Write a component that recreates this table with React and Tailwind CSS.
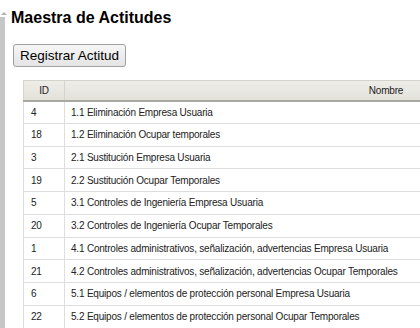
import React from 'react';

const rows = [
  [4, '1.1 Eliminación Empresa Usuaria'],
  [18, '1.2 Eliminación Ocupar temporales'],
  [3, '2.1 Sustitución Empresa Usuaria'],
  [19, '2.2 Sustitución Ocupar Temporales'],
  [5, '3.1 Controles de Ingeniería Empresa Usuaria'],
  [20, '3.2 Controles de Ingeniería Ocupar Temporales'],
  [1, '4.1 Controles administrativos, señalización, advertencias Empresa Usuaria'],
  [21, '4.2 Controles administrativos, señalización, advertencias Ocupar Temporales'],
  [6, '5.1 Equipos / elementos de protección personal Empresa Usuaria'],
  [22, '5.2 Equipos / elementos de protección personal Ocupar Temporales'],
];

export default function App() {
  return (
    <div
      className="flex h-[328px] w-[420px] overflow-hidden bg-white text-[#222]"
      style={{ fontFamily: '"Liberation Sans", Arial, sans-serif' }}
    >
      {/* sidebar strip */}
      <div className="flex w-[5px] shrink-0 flex-col">
        <div className="h-[12px]" />
        <div className="ml-[1px] h-0 w-0 border-x-[3px] border-b-[3px] border-x-transparent border-b-[#b0b0b0]" />
        <div className="mt-[2px] flex-1 bg-[#c6c6c6]" />
      </div>

      <div className="flex-1 pl-[6px]">
        <h1 className="mt-[7px] text-[16px] font-bold leading-[22px] text-black">Maestra de Actitudes</h1>
        <button className="ml-[2px] mt-[15px] h-[23px] w-[113px] rounded-[3px] border border-[#a0a0a0] bg-gradient-to-b from-[#f6f6f6] to-[#e4e4e4] text-[13.5px] leading-[20px] text-black">
          Registrar Actitud
        </button>

        <table className="ml-[12px] mt-[13px] w-[685px] border-collapse text-[10px] tracking-[-0.2px]">
          <thead>
            <tr className="h-[20px] bg-gradient-to-b from-[#eeede8] to-[#e2e1da]">
              <th className="w-[41px] border border-b-2 border-[#d4d3cc] border-b-[#a8a7a0] font-normal">ID</th>
              <th className="border border-b-2 border-[#d4d3cc] border-b-[#a8a7a0] font-normal">Nombre</th>
            </tr>
          </thead>
          <tbody>
            {rows.map(([id, name]) => (
              <tr key={id} className="h-[22.75px]">
                <td className="border border-[#dedede] pl-[7px]">{id}</td>
                <td className="border border-[#dedede] pl-[6px]">{name}</td>
              </tr>
            ))}
          </tbody>
        </table>
      </div>
    </div>
  );
}
